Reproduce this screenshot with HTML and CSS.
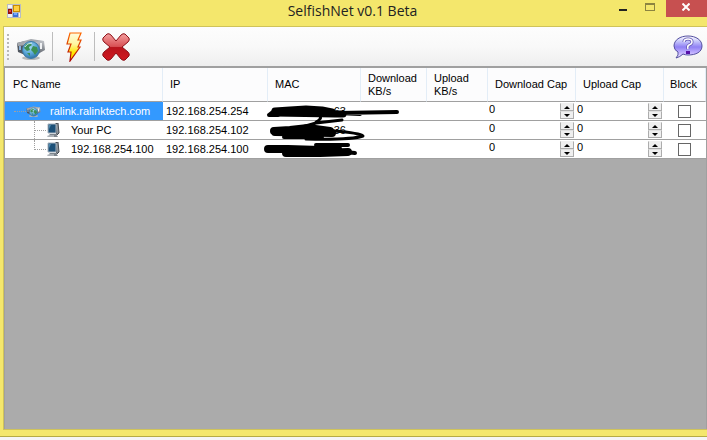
FILE: index.html
```
<!DOCTYPE html>
<html lang="en">
<head>
  <meta charset="UTF-8">
  <meta name="viewport" content="width=device-width, initial-scale=1.0">
  <title>SelfishNet v0.1 Beta</title>
  <link rel="stylesheet" href="styles.css">
</head>
<body>
  <!-- Shared icons -->
  <svg class="defs" width="0" height="0" aria-hidden="true">
    <defs>
      <linearGradient id="metal" x1="0" y1="0" x2="0" y2="1">
        <stop offset="0" stop-color="#c0c3c8"/><stop offset="1" stop-color="#5c626a"/>
      </linearGradient>
      <radialGradient id="ocean" cx="0.4" cy="0.3" r="0.7">
        <stop offset="0" stop-color="#a8dcf4"/><stop offset="0.6" stop-color="#5aa6d8"/><stop offset="1" stop-color="#2f74a8"/>
      </radialGradient>
      <linearGradient id="bolt" x1="0" y1="0" x2="0" y2="1">
        <stop offset="0" stop-color="#fffbe0"/><stop offset="0.4" stop-color="#fff6a0"/><stop offset="0.7" stop-color="#ffe600"/><stop offset="1" stop-color="#ffd800"/>
      </linearGradient>
      <linearGradient id="boltEdge" x1="0" y1="0" x2="0" y2="1">
        <stop offset="0" stop-color="#ff6a00"/><stop offset="1" stop-color="#a80000"/>
      </linearGradient>
      <linearGradient id="red" x1="0" y1="0" x2="0" y2="1">
        <stop offset="0" stop-color="#f4a0a0"/><stop offset="0.48" stop-color="#d85054"/><stop offset="0.52" stop-color="#b8141c"/><stop offset="1" stop-color="#d01820"/>
      </linearGradient>
      <linearGradient id="bubble" x1="0" y1="0" x2="0" y2="1">
        <stop offset="0" stop-color="#ffffff"/><stop offset="0.25" stop-color="#c4c4fa"/><stop offset="0.5" stop-color="#9080f4"/><stop offset="0.8" stop-color="#c8b8ff"/><stop offset="1" stop-color="#f4f0ff"/>
      </linearGradient>
      <symbol id="router" viewBox="0 0 30 22">
        <ellipse cx="15" cy="20" rx="9" ry="2" fill="#b8b8b8"/>
        <path d="M1 5 L9 3 L9 17 L2 14 Z" fill="#50565e"/>
        <path d="M1 5 L15 1 L28 3 L28 5 L2 8 Z" fill="#a4a8ae"/>
        <path d="M8 5 L28 3 L29 12 L20 17 L8 16 Z" fill="url(#metal)"/>
        <path d="M3 8 h2 v4 h-2z" fill="#8ab0d8"/>
        <path d="M24 5 h2 v6 h-2z" fill="#f0f2f4"/>
        <circle cx="15" cy="12" r="8.5" fill="url(#ocean)" stroke="#3c7aa8"/>
        <path d="M10 6 L14 5 L16 7 L13 9 L14 12 L11 13 L8 10 Z M17 8 L21 9 L22 13 L19 17 L17 14 L15 12 Z M11 15 L14 15 L14 18 Z" fill="#3c9054"/>
        <path d="M9 9 Q11 5 16 5" fill="none" stroke="#e4f6ff" opacity="0.8"/>
      </symbol>
      <symbol id="computer" viewBox="0 0 14 15">
        <path d="M9 1 L12 0 L13 10 L11 12 Z" fill="#8c949c" stroke="#454b52"/>
        <path d="M2 1 L10 1 L10 10 L2 10 Z" fill="#1c5078" stroke="#a4b0bc"/>
        <path d="M3 2 L5 2 L3 6 Z" fill="#4c8ab0"/>
        <path d="M4 11 L10 11 L12 14 L1 14 Z" fill="#7c848c"/>
        <path d="M1 13 H8" stroke="#d8dce0"/>
      </symbol>
    </defs>
  </svg>

  <div class="window">
    <header class="titlebar">
      <svg class="app-icon" viewBox="0 0 14 14" aria-hidden="true">
        <path d="M0 0 h14 v14 h-14z" fill="#b8bcc4"/>
        <path d="M1 1 h4 v3 h-4z M1 10 h4 v3 h-4z M12 9 h1 v4 h-1z" fill="#f4f4f4"/>
        <path d="M6 1 h7 v7 h-7z" fill="#c88c00"/><path d="M7 2 h5 v5 h-5z" fill="#ffd040"/>
        <path d="M1 5 h4 v5 h-4z" fill="#901010"/><path d="M2 6 h2 v2 h-2z" fill="#e84040"/>
        <path d="M6 9 h5 v4 h-5z" fill="#3c70d8"/><path d="M7 9 h3 v2 h-3z" fill="#70a8ff"/>
      </svg>
      <h1>SelfishNet v0.1 Beta</h1>
      <div class="window-buttons">
        <button class="minimize" aria-label="Minimize"><svg viewBox="0 0 8 2"><path d="M0 0h8v2h-8z" fill="#222"/></svg></button>
        <button class="maximize" aria-label="Maximize"><svg viewBox="0 0 10 8"><path d="M0 0h10v8h-10z M1 2v5h8v-5z" fill="#8c8440" fill-rule="evenodd"/></svg></button>
        <button class="close" aria-label="Close"><svg viewBox="0 0 8 8"><path d="M0.5 0.5L7.5 7.5M7.5 0.5L0.5 7.5" stroke="#fff" stroke-width="2"/></svg></button>
      </div>
    </header>

    <main class="client">
      <div class="toolbar">
        <span class="grip"></span>
        <button class="tool discover" aria-label="Network discovery"><svg viewBox="0 0 30 22"><use href="#router"/></svg></button>
        <span class="separator"></span>
        <button class="tool start" aria-label="Start"><svg viewBox="0 0 16 30"><path d="M4 1 H15 L12 8 H15 L12 15 H14 L4 29 L5 20 H2 L5 12 H1 Z" fill="url(#bolt)" stroke="url(#boltEdge)" stroke-width="1.2"/></svg></button>
        <span class="separator"></span>
        <button class="tool stop" aria-label="Stop"><svg viewBox="0 0 28 28"><path d="M1 5 L5 1 Q7 0 9 2 L14 8 L19 2 Q21 0 23 1 L27 5 Q28 7 26 9 L20 14 L26 19 Q28 21 27 23 L23 27 Q21 28 19 26 L14 20 L9 26 Q7 28 5 27 L1 23 Q0 21 2 19 L8 14 L2 9 Q0 7 1 5 Z" fill="url(#red)" stroke="#8c1018"/></svg></button>
        <button class="tool help" aria-label="Help"><svg viewBox="0 0 30 24">
          <path d="M15 1 C23 1 29 5 29 11 C29 17 23 20 15 20 Q12 20 10 19 Q7 22 3 23 Q6 20 5 17 Q1 15 1 11 C1 5 7 1 15 1 Z" fill="url(#bubble)" stroke="#5450a0"/>
          <path d="M11 7 Q11 4 15 4 Q19 4 19 7 Q19 9 16 10 Q14 11 15 14" fill="none" stroke="#6458b4" stroke-width="3"/>
          <path d="M11 7 Q11 4 15 4 Q19 4 19 7 Q19 9 16 10 Q14 11 15 14" fill="none" stroke="#fff" stroke-width="1.5"/>
          <path d="M13 16h4v3h-4z" fill="#5810a8"/></svg></button>
      </div>

      <div class="grid">
        <table>
          <colgroup>
            <col class="col-name"><col class="col-ip"><col class="col-mac"><col class="col-down"><col class="col-up"><col class="col-cap"><col class="col-cap"><col>
          </colgroup>
          <thead>
            <tr><th>PC Name</th><th>IP</th><th>MAC</th><th>Download KB/s</th><th>Upload KB/s</th><th>Download Cap</th><th>Upload Cap</th><th class="block">Block</th></tr>
          </thead>
          <tbody>
            <tr>
              <td class="selected"><div class="node"><span class="branch"></span><svg class="router" viewBox="0 0 30 22"><use href="#router"/></svg><span>ralink.ralinktech.com</span></div></td>
              <td>192.168.254.254</td><td class="mac">63</td><td></td><td></td>
              <td><div class="spinner"><input type="text" value="0" aria-label="Download cap, ralink.ralinktech.com"><span><button class="up" aria-label="Increase"></button><button class="down" aria-label="Decrease"></button></span></div></td>
              <td><div class="spinner"><input type="text" value="0" aria-label="Upload cap, ralink.ralinktech.com"><span><button class="up" aria-label="Increase"></button><button class="down" aria-label="Decrease"></button></span></div></td>
              <td class="block"><input type="checkbox" aria-label="Block ralink.ralinktech.com"></td>
            </tr>
            <tr>
              <td><div class="node child"><span class="branch"></span><svg class="pc" viewBox="0 0 14 15"><use href="#computer"/></svg><span>Your PC</span></div></td>
              <td>192.168.254.102</td><td class="mac">36</td><td></td><td></td>
              <td><div class="spinner"><input type="text" value="0" aria-label="Download cap, Your PC"><span><button class="up" aria-label="Increase"></button><button class="down" aria-label="Decrease"></button></span></div></td>
              <td><div class="spinner"><input type="text" value="0" aria-label="Upload cap, Your PC"><span><button class="up" aria-label="Increase"></button><button class="down" aria-label="Decrease"></button></span></div></td>
              <td class="block"><input type="checkbox" aria-label="Block Your PC"></td>
            </tr>
            <tr>
              <td><div class="node child last"><span class="branch"></span><svg class="pc" viewBox="0 0 14 15"><use href="#computer"/></svg><span>192.168.254.100</span></div></td>
              <td>192.168.254.100</td><td></td><td></td><td></td>
              <td><div class="spinner"><input type="text" value="0" aria-label="Download cap, 192.168.254.100"><span><button class="up" aria-label="Increase"></button><button class="down" aria-label="Decrease"></button></span></div></td>
              <td><div class="spinner"><input type="text" value="0" aria-label="Upload cap, 192.168.254.100"><span><button class="up" aria-label="Increase"></button><button class="down" aria-label="Decrease"></button></span></div></td>
              <td class="block"><input type="checkbox" aria-label="Block 192.168.254.100"></td>
            </tr>
          </tbody>
        </table>

        <!-- Marker strokes hiding the MAC addresses -->
        <svg class="marker" viewBox="0 0 145 60" aria-hidden="true">
          <g fill="none" stroke="#000" stroke-linecap="round" stroke-linejoin="round">
            <path d="M15 9 L30 8 L46 7 L62 8 L72 10 M15 11 L75 12 L83 12" stroke-width="7"/>
            <path d="M9 13 L14 9 M9 13 L18 13" stroke-width="4"/>
            <path d="M78 11 L100 12 M78 11 L137 10" stroke-width="4"/>
            <path d="M60 14 Q62 17 56 20 M82 18 L56 21 L42 25" stroke-width="3"/>
            <path d="M14 29 L30 28 L48 26 L70 29 M15 30 L72 31" stroke-width="8"/>
            <path d="M24 35 L62 35" stroke-width="4"/>
            <path d="M74 29 Q100 31 103 34 Q92 38 46 37" stroke-width="3"/>
            <path d="M8 47 L28 47 L60 48 L78 47 M26 51 L60 51 L88 50" stroke-width="8"/>
            <path d="M56 43 L88 43 M84 50 L95 51" stroke-width="4"/>
          </g>
        </svg>
      </div>
    </main>
  </div>
</body>
</html>
```

FILE: styles.css
```
* { box-sizing: border-box; }
body {
  margin: 0; background: #f5f5f5; color: #000;
  font-family: "Liberation Sans", Arial, sans-serif; font-size: 11px; line-height: 13px;
}
button { padding: 0; border: none; background: none; }
svg { display: block; flex-shrink: 0; }
.defs { position: absolute; }
.window {
  display: flex; flex-direction: column;
  height: calc(100vh - 3px);
  padding: 0 0 6px 3px;
  background: #f4e76c; border-bottom: 1px solid #b5ab45;
}

/* Title bar */
.titlebar { display: flex; align-items: flex-start; height: 26px; }
.app-icon { width: 14px; height: 14px; margin: 4px 0 0 4px; }
h1 {
  flex: 1; margin: 0; padding-left: 78px; text-align: center;
  font: 14px/22px "Open Sans", "Segoe UI", sans-serif; color: #222;
}
.window-buttons { display: flex; }
.window-buttons button { display: flex; justify-content: center; align-items: flex-start; width: 27px; height: 17px; }
.window-buttons .minimize { width: 33px; }
.minimize svg { width: 8px; height: 2px; margin-top: 9px; }
.maximize svg { width: 10px; height: 8px; margin: 3px 6px 0 0; }
.window-buttons .close { width: 41px; background: #c75050; }
.close svg { width: 8px; height: 8px; margin: 3px 2px 0 0; }

/* Toolbar */
.client {
  flex: 1; display: flex; flex-direction: column;
  border: 1px solid #cfc35a; border-right: none; background: #f0f0f0;
}
.toolbar {
  display: flex; align-items: center; height: 39px; padding: 0 4px 0 3px;
  background: linear-gradient(#fdfdfd, #f9f9f9 50%, #eeeeee);
}
.grip { width: 2px; height: 26px; background: repeating-linear-gradient(#b8b8b8 0 2px, transparent 2px 4px); }
.tool { display: flex; align-items: center; justify-content: center; width: 41px; height: 36px; }
.discover { width: 43px; }
.discover svg { width: 30px; height: 22px; margin-top: 4px; }
.start svg { width: 16px; height: 30px; }
.stop svg { width: 28px; height: 28px; }
.help { width: 30px; margin-left: auto; }
.help svg { width: 30px; height: 24px; }
.separator { width: 1px; height: 29px; background: #bdbdbd; }

/* Client list */
.grid {
  position: relative; flex: 1; background: #ababab;
  border: 1px solid #a0a0a0; border-top-width: 2px; border-bottom: none;
}
table { width: 100%; table-layout: fixed; border-collapse: separate; border-spacing: 0; background: #fff; }
.col-name { width: 158px; }
.col-ip { width: 105px; }
.col-mac { width: 93px; }
.col-down { width: 66px; }
.col-up { width: 61px; }
.col-cap { width: 88px; }
th {
  height: 34px; padding: 0 6px 0 7px;
  text-align: left; vertical-align: middle; font-weight: normal;
  background: #fcfcfd; border-right: 1px solid #e3edf7; border-bottom: 1px solid #a0a0a0;
}
th:first-child { padding-left: 8px; }
td { height: 19px; padding: 0 0 0 3px; border-bottom: 1px solid #a0a0a0; }
td:first-child { padding: 0; }
th.block, td.block { padding: 0 2px 0 0; text-align: center; }
.mac { padding-right: 15px; text-align: right; }
.selected { background: #3399ff; color: #fff; }
.marker { position: absolute; left: 255px; top: 34px; width: 145px; height: 60px; }

/* Tree nodes */
.node { display: flex; align-items: center; height: 18px; padding-left: 9px; }
.branch { width: 12px; border-top: 1px dotted #a0a0a0; }
.router { width: 15px; height: 11px; margin-right: 9px; }
.child { padding-left: 29px; }
.child .branch {
  display: flex; align-items: center; align-self: stretch;
  border-top: none; border-left: 1px dotted #a0a0a0;
}
.child .branch::before { content: ""; flex: 1; border-top: 1px dotted #a0a0a0; }
.last .branch { align-self: flex-start; align-items: flex-end; height: 10px; }
.pc { width: 14px; height: 15px; margin-right: 11px; }

/* Numeric boxes */
td:has(.spinner) { padding-left: 1px; }
.spinner { display: flex; justify-content: space-between; height: 18px; }
.spinner input { flex: 1; min-width: 0; height: 14px; padding: 0; border: none; background: none; font: inherit; outline: none; }
.spinner span { display: flex; flex-direction: column; width: 14px; margin: 1px 2px 0 0; }
.spinner button {
  display: flex; justify-content: center; align-items: center; height: 8px;
  background: #efefef; border: 1px solid #acacac; border-top-color: #e0e0e0;
}
.spinner .up { border-top-color: #efefef; }
.spinner button::before { content: ""; border: 3px solid transparent; }
.spinner .up::before { border-top: none; border-bottom: 3px solid #000; }
.spinner .down::before { border-bottom: none; border-top: 3px solid #000; }
input[type="checkbox"] {
  appearance: none; display: block; width: 13px; height: 13px; margin: 0 auto;
  background: #fff; border: 1px solid #666;
}
```
